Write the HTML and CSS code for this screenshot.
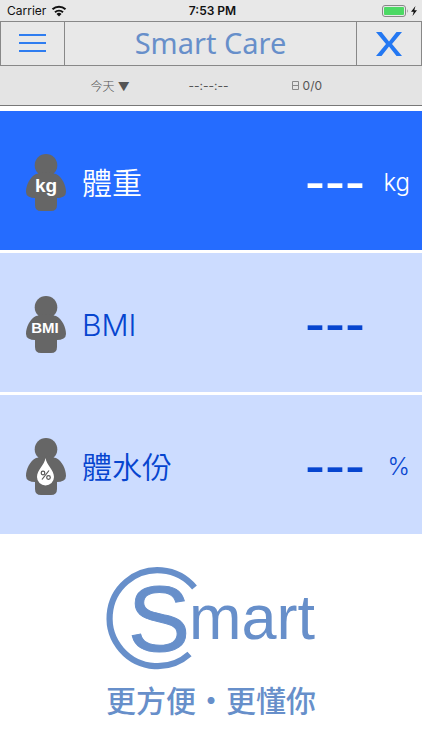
FILE: index.html
```html
<!DOCTYPE html>
<html lang="zh-Hant">
<head>
<meta charset="utf-8">
<meta name="viewport" content="width=device-width, initial-scale=1">
<title>Smart Care</title>
<link rel="stylesheet" href="styles.css">
</head>
<body>
<svg width="0" height="0" class="defs" aria-hidden="true">
  <symbol id="person" viewBox="0 0 40 58">
    <g fill="#666"><circle cx="20" cy="11.300" r="11.300"/><path d="M10 20Q20 17 30 20C36 23 40 31 40 38q0 3-2.500 4.500-3 1.500-6.500 1.500V51q0 6-6 6H15q-6 0-6-6v-7q-3.500 0-6.500-1.500Q0 41 0 38C0 31 4 23 10 20z"/></g>
  </symbol>
</svg>
<div class="status">
  <div class="carrier">Carrier
    <svg width="16" height="12" viewBox="0 0 16 12" fill="none" stroke="#111" stroke-width="2"><path d="M1.500 4.300a9.500 9.500 0 0 1 13 0M4 7.300a6 6 0 0 1 8 0"/><path d="M8 11.500L5.500 9a3.600 3.600 0 0 1 5 0z" fill="#111" stroke="none"/></svg>
  </div>
  <div class="clock">7:53 PM</div>
  <div class="power">
    <svg width="36" height="12" viewBox="0 0 36 12"><rect x=".5" y=".5" width="23" height="11" rx="2.500" fill="none" stroke="#888"/><rect x="2" y="2" width="20" height="8" rx="1" fill="#4cd964"/><path d="M25 4q1.500 2 0 4z" fill="#888"/><path d="M33.500 1L29 6.700h2.700L30.500 11 35 5.200h-2.700z" fill="#111"/></svg>
  </div>
</div>
<header class="nav">
  <button class="nav-btn" aria-label="選單"><svg width="27" height="20" viewBox="0 0 27 20" stroke="#2f7df0" stroke-width="2"><path d="M0 1h27M0 9h27M0 17h27"/></svg></button>
  <h1>Smart Care</h1>
  <button class="nav-btn close" aria-label="關閉"><svg width="26" height="24" viewBox="0 0 26 24" fill="#2478f2"><path d="M0 0h5.500L13 9.500 20.500 0H26L16 12l10 12h-5.500L13 14.500 5.500 24H0l10-12z"/></svg></button>
</header>
<div class="filter">
  <button class="day">今天 ▼</button>
  <span>--:--:--</span>
  <span class="count"><svg width="7" height="9" viewBox="0 0 7 9" fill="none" stroke="#888"><path d="M.5.5h6v8h-6zM1 4.500h5"/></svg>0/0</span>
</div>
<main>
  <section class="row active">
    <svg class="icon" viewBox="0 0 40 58"><use href="#person"/><text x="20" y="38" text-anchor="middle" class="glyph">kg</text></svg>
    <h2>體重</h2><span class="value">---</span><span class="unit">kg</span>
  </section>
  <section class="row">
    <svg class="icon" viewBox="0 0 40 58"><use href="#person"/><text x="19" y="37" text-anchor="middle" class="glyph small">BMI</text></svg>
    <h2>BMI</h2><span class="value">---</span><span class="unit"></span>
  </section>
  <section class="row">
    <svg class="icon" viewBox="0 0 40 58"><use href="#person"/><path d="M19.500 20C18.500 27 11 32 11 39a8.500 8.500 0 0 0 17 0C28 32 20.500 27 19.500 20z" fill="#fff"/><g fill="none" stroke="#555" stroke-width="1.200"><circle cx="17" cy="35" r="1.800"/><circle cx="22.500" cy="39.500" r="1.800"/><path d="M23 32.500l-7 9"/></g></svg>
    <h2>體水份</h2><span class="value">---</span><span class="unit">%</span>
  </section>
</main>
<footer>
  <svg class="logo" viewBox="0 0 210 104" role="img" aria-label="Smart">
    <path d="M88.500 21.500A48 48 0 1 0 83.500 88" fill="none" stroke="#678fca" stroke-width="6.200"/>
    <text x="22" y="85" class="logo-s">S</text>
    <text x="83" y="73" class="logo-rest">mart</text>
  </svg>
  <p>更方便・更懂你</p>
</footer>
</body>
</html>
```
FILE: styles.css
```css
* { box-sizing: border-box; }
body {
  margin: 0;
  background: #fff;
  font-family: Inter, "Noto Sans CJK TC", sans-serif;
}
button {
  border: 0;
  padding: 0;
  background: none;
  font: inherit;
  color: inherit;
}
.defs { position: absolute; }
.status {
  display: grid;
  grid-template-columns: 1fr auto 1fr;
  align-items: center;
  height: 21px;
  padding: 0 4px 0 7px;
  background: #e8e8e8;
  color: #111;
  font-size: 12px;
}
.carrier { display: flex; align-items: center; gap: 5px; }
.clock { font-weight: 600; }
.power { display: flex; justify-content: flex-end; }
.nav {
  display: grid;
  grid-template-columns: 64px 1fr 65px;
  height: 45px;
  border: 1px solid #888;
  background: #e8e8e8;
}
.nav-btn {
  display: flex;
  align-items: center;
  justify-content: center;
  border-right: 1px solid #888;
}
.nav-btn.close { border-right: 0; border-left: 1px solid #888; }
h1 {
  margin: 0;
  color: #678fca;
  font: 400 29px/42px "Noto Sans", sans-serif;
  text-align: center;
}
.filter {
  display: grid;
  grid-template-columns: 1fr 1fr 1fr;
  align-items: center;
  justify-items: center;
  height: 40px;
  padding: 0 66px 0 61px;
  border-bottom: 1px solid #777;
  background: #e4e4e4;
  color: #555;
  font-size: 12px;
}
.day { font-weight: 300; }
.count { display: flex; align-items: center; gap: 4px; }
main {
  display: grid;
  gap: 3px;
  padding: 5px 0;
}
.row {
  display: grid;
  grid-template-columns: 40px 1fr auto 45px;
  align-items: center;
  height: 139px;
  padding: 4px 12px 0 26px;
  background: #ccdcff;
  color: #0645cf;
}
.row.active { background: #256cff; color: #fff; }
.icon { width: 40px; height: 58px; }
.glyph { fill: #fff; font: bold 19px "Liberation Sans", sans-serif; }
.glyph.small { font-size: 15px; }
h2 {
  margin: 0 0 0 16px;
  font-size: 30px;
  font-weight: 350;
  line-height: 36px;
}
.value {
  padding-bottom: 4px;
  font: 60px/56px "Liberation Sans", sans-serif;
}
.unit { font-size: 24px; font-weight: 350; text-align: right; }
footer {
  display: flex;
  flex-direction: column;
  align-items: center;
  padding-top: 27px;
  color: #678fca;
}
.logo { width: 210px; height: 104px; overflow: visible; }
.logo-s {
  fill: #678fca;
  stroke: #678fca;
  font: 93px "Liberation Sans", sans-serif;
}
.logo-rest { fill: #678fca; font: 63px "Liberation Sans", sans-serif; }
footer p {
  margin: 7px 0 0;
  font: 500 30px/44px "Noto Sans CJK TC", sans-serif;
}
```
